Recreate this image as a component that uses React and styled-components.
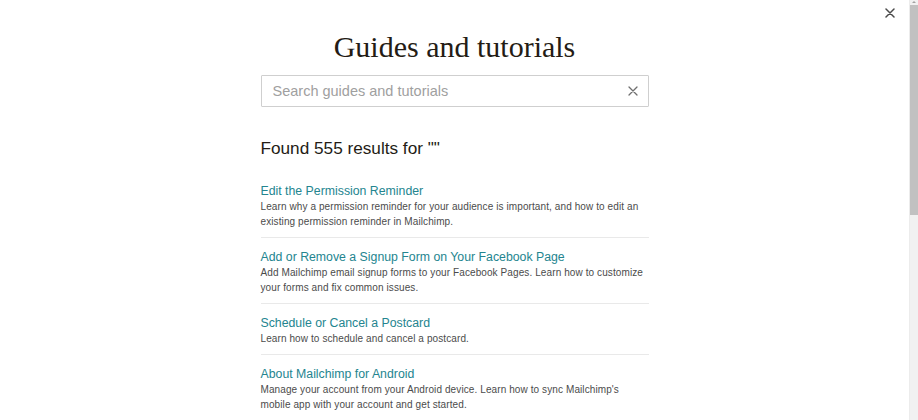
import styled, { createGlobalStyle } from 'styled-components'

const results = [
  {
    title: 'Edit the Permission Reminder',
    text: 'Learn why a permission reminder for your audience is important, and how to edit an existing permission reminder in Mailchimp.',
  },
  {
    title: 'Add or Remove a Signup Form on Your Facebook Page',
    text: 'Add Mailchimp email signup forms to your Facebook Pages. Learn how to customize your forms and fix common issues.',
  },
  {
    title: 'Schedule or Cancel a Postcard',
    text: 'Learn how to schedule and cancel a postcard.',
  },
  {
    title: 'About Mailchimp for Android',
    text: "Manage your account from your Android device. Learn how to sync Mailchimp's mobile app with your account and get started.",
  },
  {
    title: 'Getting Started with Automations',
    text: 'Learn how to set up automated emails that send to your contacts based on their actions and behavior.',
  },
  {
    title: 'Import Contacts to Mailchimp',
    text: 'Learn how to import contacts from a CSV file, a spreadsheet, or another service into your audience.',
  },
]

const CloseIcon = ({ size = 10, color = '#555', weight = 1.6 }) => (
  <svg width={size} height={size} viewBox="0 0 10 10" fill="none">
    <path d="M1 1L9 9M9 1L1 9" stroke={color} strokeWidth={weight} strokeLinecap="round" />
  </svg>
)

const App = () => {
  return (
    <>
      <GlobalStyle />
      <Page>
        <Scroller>
          <TopBar>
            <IconButton aria-label="Close">
              <CloseIcon size={10} color="#4a4a4a" weight={1.5} />
            </IconButton>
          </TopBar>
          <Column>
            <Title>Guides and tutorials</Title>
            <SearchBox>
              <SearchInput placeholder="Search guides and tutorials" />
              <IconButton aria-label="Clear search">
                <CloseIcon size={10} color="#6f6f6f" weight={1.3} />
              </IconButton>
            </SearchBox>
            <Count>Found 555 results for ""</Count>
            <ResultList>
              {results.map((r) => (
                <Result key={r.title}>
                  <ResultTitle href="#">{r.title}</ResultTitle>
                  <ResultText>{r.text}</ResultText>
                </Result>
              ))}
            </ResultList>
          </Column>
        </Scroller>
        <ScrollTrack>
          <ScrollArrow />
          <ScrollThumb />
        </ScrollTrack>
      </Page>
    </>
  )
}

const GlobalStyle = createGlobalStyle`
  html, body {
    margin: 0;
    padding: 0;
    overflow: hidden;
    background: #ffffff;
  }
  * {
    box-sizing: border-box;
  }
`

const Page = styled.div`
  height: 420px;
  width: 918px;
  display: flex;
  background: #ffffff;
  font-family: "Liberation Sans", Arial, sans-serif;
`

const Scroller = styled.div`
  flex: 1;
  overflow: hidden;
`

const ScrollTrack = styled.div`
  width: 9px;
  flex-shrink: 0;
  display: flex;
  flex-direction: column;
  align-items: stretch;
  background: #f1f1f1;
  border-left: 1px solid #ececec;
`

const ScrollArrow = styled.div`
  height: 5px;
  display: flex;
  justify-content: center;
  &::before {
    content: '';
    margin-top: 1px;
    width: 0;
    height: 0;
    border-left: 2px solid transparent;
    border-right: 2px solid transparent;
    border-bottom: 2px solid #a3a3a3;
  }
`

const ScrollThumb = styled.div`
  height: 210px;
  background: #c1c1c1;
`

const TopBar = styled.div`
  height: 26px;
  display: flex;
  align-items: center;
  justify-content: flex-end;
  padding-right: 14px;
`

const IconButton = styled.button`
  display: flex;
  align-items: center;
  justify-content: center;
  border: 0;
  padding: 0;
  background: transparent;
  cursor: pointer;
`

const Column = styled.div`
  width: 388px;
  margin: 0 auto;
`

const Title = styled.h1`
  margin: 4px 0 0;
  font-family: "Liberation Serif", Georgia, serif;
  font-weight: 400;
  font-size: 30px;
  line-height: 34px;
  text-align: center;
  color: #241c15;
`

const SearchBox = styled.div`
  margin-top: 11px;
  height: 32px;
  display: flex;
  align-items: center;
  border: 1px solid #cfcfcf;
  border-radius: 1px;
  padding: 0 10px 0 11px;
`

const SearchInput = styled.input`
  flex: 1;
  border: 0;
  outline: none;
  font-family: "Liberation Sans", Arial, sans-serif;
  font-size: 14.5px;
  color: #241c15;
  background: transparent;
  padding: 0;

  &::placeholder {
    color: #a0a0a0;
  }
`

const Count = styled.h2`
  margin: 29px 0 0;
  font-weight: 400;
  font-size: 17.2px;
  line-height: 24px;
  color: #241c15;
`

const ResultList = styled.ul`
  list-style: none;
  margin: 12px 0 0;
  padding: 0;
`

const Result = styled.li`
  padding: 11px 0 8px;
  border-bottom: 1px solid #e9e9e9;
`

const ResultTitle = styled.a`
  display: block;
  font-size: 12.3px;
  line-height: 16px;
  color: #24858f;
  text-decoration: none;
`

const ResultText = styled.p`
  margin: 0;
  font-size: 10px;
  line-height: 15px;
  letter-spacing: 0.1px;
  color: #4b4b4b;
`

export default App
